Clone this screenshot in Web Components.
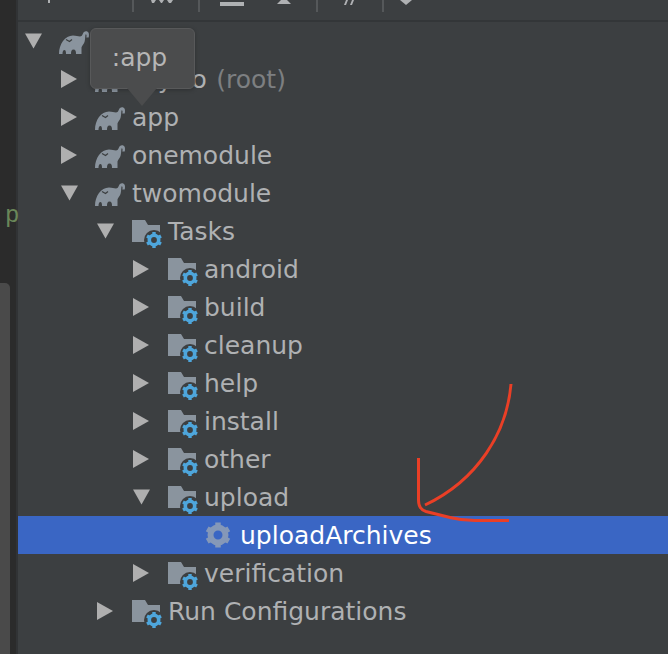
<!DOCTYPE html>
<html>
<head>
<meta charset="utf-8">
<style>
  html, body { margin: 0; height: 100%; background: #3c3f41; overflow: hidden; }
</style>
</head>
<body>
<gradle-panel>
  <tree-row depth="0" arrow="down" icon="gradle"></tree-row>
  <tree-row depth="1" arrow="right" icon="gradle"><span style="letter-spacing:1.500px">mydo</span> <span style="color:#7d7f81">(root)</span></tree-row>
  <tree-row depth="1" arrow="right" icon="gradle">app</tree-row>
  <tree-row depth="1" arrow="right" icon="gradle">onemodule</tree-row>
  <tree-row depth="1" arrow="down" icon="gradle">twomodule</tree-row>
  <tree-row depth="2" arrow="down" icon="folder">Tasks</tree-row>
  <tree-row depth="3" arrow="right" icon="folder">android</tree-row>
  <tree-row depth="3" arrow="right" icon="folder">build</tree-row>
  <tree-row depth="3" arrow="right" icon="folder">cleanup</tree-row>
  <tree-row depth="3" arrow="right" icon="folder">help</tree-row>
  <tree-row depth="3" arrow="right" icon="folder">install</tree-row>
  <tree-row depth="3" arrow="right" icon="folder">other</tree-row>
  <tree-row depth="3" arrow="down" icon="folder">upload</tree-row>
  <tree-row depth="4" icon="gear" selected>uploadArchives</tree-row>
  <tree-row depth="3" arrow="right" icon="folder">verification</tree-row>
  <tree-row depth="2" arrow="right" icon="folder">Run Configurations</tree-row>
</gradle-panel>
<script>
const elephant = `<svg width="30" height="24" viewBox="0 0 30 24"><path fill="#8a949e" d="M0 23C0 13 6 4.500 14 4.500C17 4.500 19 5.500 21 5.500C23.500 5.500 23.500 2.500 25 1C26.500 -.2 29 .2 29.700 2C30.200 3.500 30 5 29.700 6.500L27.300 6.500C27.800 5 27.600 3.200 26.800 3.200C26 3.200 26.500 8 25.500 11C24.500 13.500 23 14.500 22.500 16.500V23H17C17 20 16.500 18.500 14.500 18.500C12.500 18.500 12 20 12 23H7C7 20.500 6.500 19 5.500 19C4 19 3.500 21 3.500 23Z"/><path fill="none" stroke="#3c3f41" stroke-width="1.200" d="M7 8.500L10.500 10.500L13 8.500"/></svg>`;
const folder = `<svg width="30" height="28" viewBox="0 0 30 28"><path fill="#8a949e" d="M0 0H13L16 5H28V22H0Z"/><circle cx="22" cy="20" r="10" fill="#3c3f41"/><g fill="none" stroke="#4ea6dc"><circle cx="22" cy="20" r="4.700" stroke-width="3.600"/><path stroke-width="3.400" d="M22 12V15M22 25V28M15 16L17.700 17.500M26.300 22.500L29 24M15 24L17.700 22.500M26.300 17.500L29 16"/></g></svg>`;
const gear = `<svg width="26" height="26" viewBox="0 0 26 26"><g fill="none" stroke="#8598b8"><circle cx="13" cy="13" r="7.500" stroke-width="6"/><path stroke-width="5.500" d="M13 .5V5M13 21V25.500M2.200 6.800L6 9M20 17L23.800 19.200M2.200 19.200L6 17M20 9L23.800 6.800"/></g></svg>`;

const rowTemplate = document.createElement('template');
rowTemplate.innerHTML = `
  <style>
    :host {
      display: flex;
      align-items: center;
      height: 38px;
      color: #afb1b3;
      font: 25px "DejaVu Sans", sans-serif;
      white-space: nowrap;
    }
    :host([selected]) {
      background-color: #3a66c4;
      color: #fff;
    }
    .arrow {
      flex: none;
      width: 17px;
      height: 18px;
      margin-right: 17px;
      display: flex;
    }
    .arrow svg { fill: #afafaf; }
    .icon {
      flex: none;
      display: flex;
      width: 37px;
    }
    .icon.gradle { margin-top: 3px; }
    .icon.folder { margin-top: 6px; padding-left: 1px; width: 36px; }
    .icon.gear { padding-left: 2px; width: 35px; }
  </style>
  <span class="arrow"></span>
  <span class="icon"></span>
  <span class="label"><slot></slot></span>
`;

class TreeRow extends HTMLElement {
  constructor() {
    super();
    this.shadow = this.attachShadow({mode: 'open'});
    this.shadow.appendChild(rowTemplate.content.cloneNode(true));
  }

  connectedCallback() {
    const depth = Number(this.getAttribute('depth'));
    this.style.paddingLeft = (7 + depth * 36) + 'px';
    const arrow = this.getAttribute('arrow');
    const arrowEl = this.shadow.querySelector('.arrow');
    if (arrow === 'down') arrowEl.innerHTML = '<svg width="18" height="18" viewBox="0 0 18 18"><path d="M0 1H18L9 17Z"/></svg>';
    if (arrow === 'right') arrowEl.innerHTML = '<svg width="17" height="18" viewBox="0 0 17 18"><path d="M0 0V18L16 9Z"/></svg>';
    const icon = this.getAttribute('icon');
    const iconEl = this.shadow.querySelector('.icon');
    iconEl.classList.add(icon);
    iconEl.innerHTML = icon === 'gradle' ? elephant : icon === 'folder' ? folder : gear;
  }
}

const toolbarTemplate = document.createElement('template');
toolbarTemplate.innerHTML = `
  <style>
    :host {
      display: block;
      height: 20px;
      border-bottom: 2px solid #333638;
    }
    svg { display: block; }
  </style>
  <svg width="650" height="20" viewBox="18 0 650 20">
    <g fill="#55585a">
      <rect x="132" width="2" height="12"/>
      <rect x="198" width="2" height="12"/>
      <rect x="316" width="2" height="12"/>
      <rect x="382" width="2" height="12"/>
    </g>
    <g fill="#afb1b3">
      <path d="M48 0H50V3H48Z"/>
      <path d="M151 0H156L154 3H152ZM159 0H164L162 3H161ZM167 0H173L171 3H169Z"/>
      <rect x="220" y="2" width="24" height="4"/>
      <path d="M277 4L281 0H287L291 4Z"/>
      <path d="M344 5L346 0H348L346 5ZM350 5L352 0H354L352 5Z"/>
      <path d="M400 0H412L406 5Z"/>
    </g>
  </svg>
`;

class PanelToolbar extends HTMLElement {
  constructor() {
    super();
    this.attachShadow({mode: 'open'}).appendChild(toolbarTemplate.content.cloneNode(true));
  }
}

const panelTemplate = document.createElement('template');
panelTemplate.innerHTML = `
  <style>
    :host {
      display: grid;
      grid-template-columns: 18px 1fr;
      width: 668px;
      height: 654px;
      position: relative;
      overflow: hidden;
    }
    .gutter {
      background: #2b2b2b;
      border-right: 2px solid #313335;
      box-sizing: border-box;
      position: relative;
      font: 24px "Liberation Mono", monospace;
      color: #6a8759;
    }
    .gutter span { position: absolute; left: 5px; top: 202px; }
    .gutter i {
      position: absolute;
      left: 0;
      top: 283px;
      width: 10px;
      height: 380px;
      background: #4a4a4a;
      border-radius: 0 5px 0 0;
    }
    .tip {
      position: absolute;
      left: 90px;
      top: 28px;
      width: 105px;
      height: 61px;
      box-sizing: border-box;
      background: #4b4c4d;
      border: 1px solid #58595a;
      border-radius: 6px;
      box-shadow: 0 1px 4px rgba(0, 0, 0, .25);
      display: flex;
      align-items: center;
      justify-content: center;
      padding: 0 6px 3px 0;
      color: #b6b6b6;
      font: 25px "DejaVu Sans", sans-serif;
    }
    .tip::after {
      content: "";
      position: absolute;
      left: 36px;
      top: 59px;
      border: 15px solid transparent;
      border-top: 18px solid #4b4c4d;
      border-bottom: 0;
    }
    .ink { position: absolute; left: 0; top: 0; pointer-events: none; }
  </style>
  <div class="gutter"><span>p</span><i></i></div>
  <div>
    <panel-toolbar></panel-toolbar>
    <div class="tree"><slot></slot></div>
  </div>
  <div class="tip">:app</div>
  <svg class="ink" width="668" height="654" fill="none" stroke="#ea3f26" stroke-width="3">
    <path d="M511 384C507 432 478 480 425 505"/>
    <path d="M418.500 458V500C418.500 507 421 510 426 511.500L450 517.500C458 519.500 465 520.500 475 520.500H509"/>
  </svg>
`;

class GradlePanel extends HTMLElement {
  constructor() {
    super();
    this.shadow = this.attachShadow({mode: 'open'});
    this.shadow.appendChild(panelTemplate.content.cloneNode(true));
  }
}

customElements.define('tree-row', TreeRow);
customElements.define('panel-toolbar', PanelToolbar);
customElements.define('gradle-panel', GradlePanel);
</script>
</body>
</html>
